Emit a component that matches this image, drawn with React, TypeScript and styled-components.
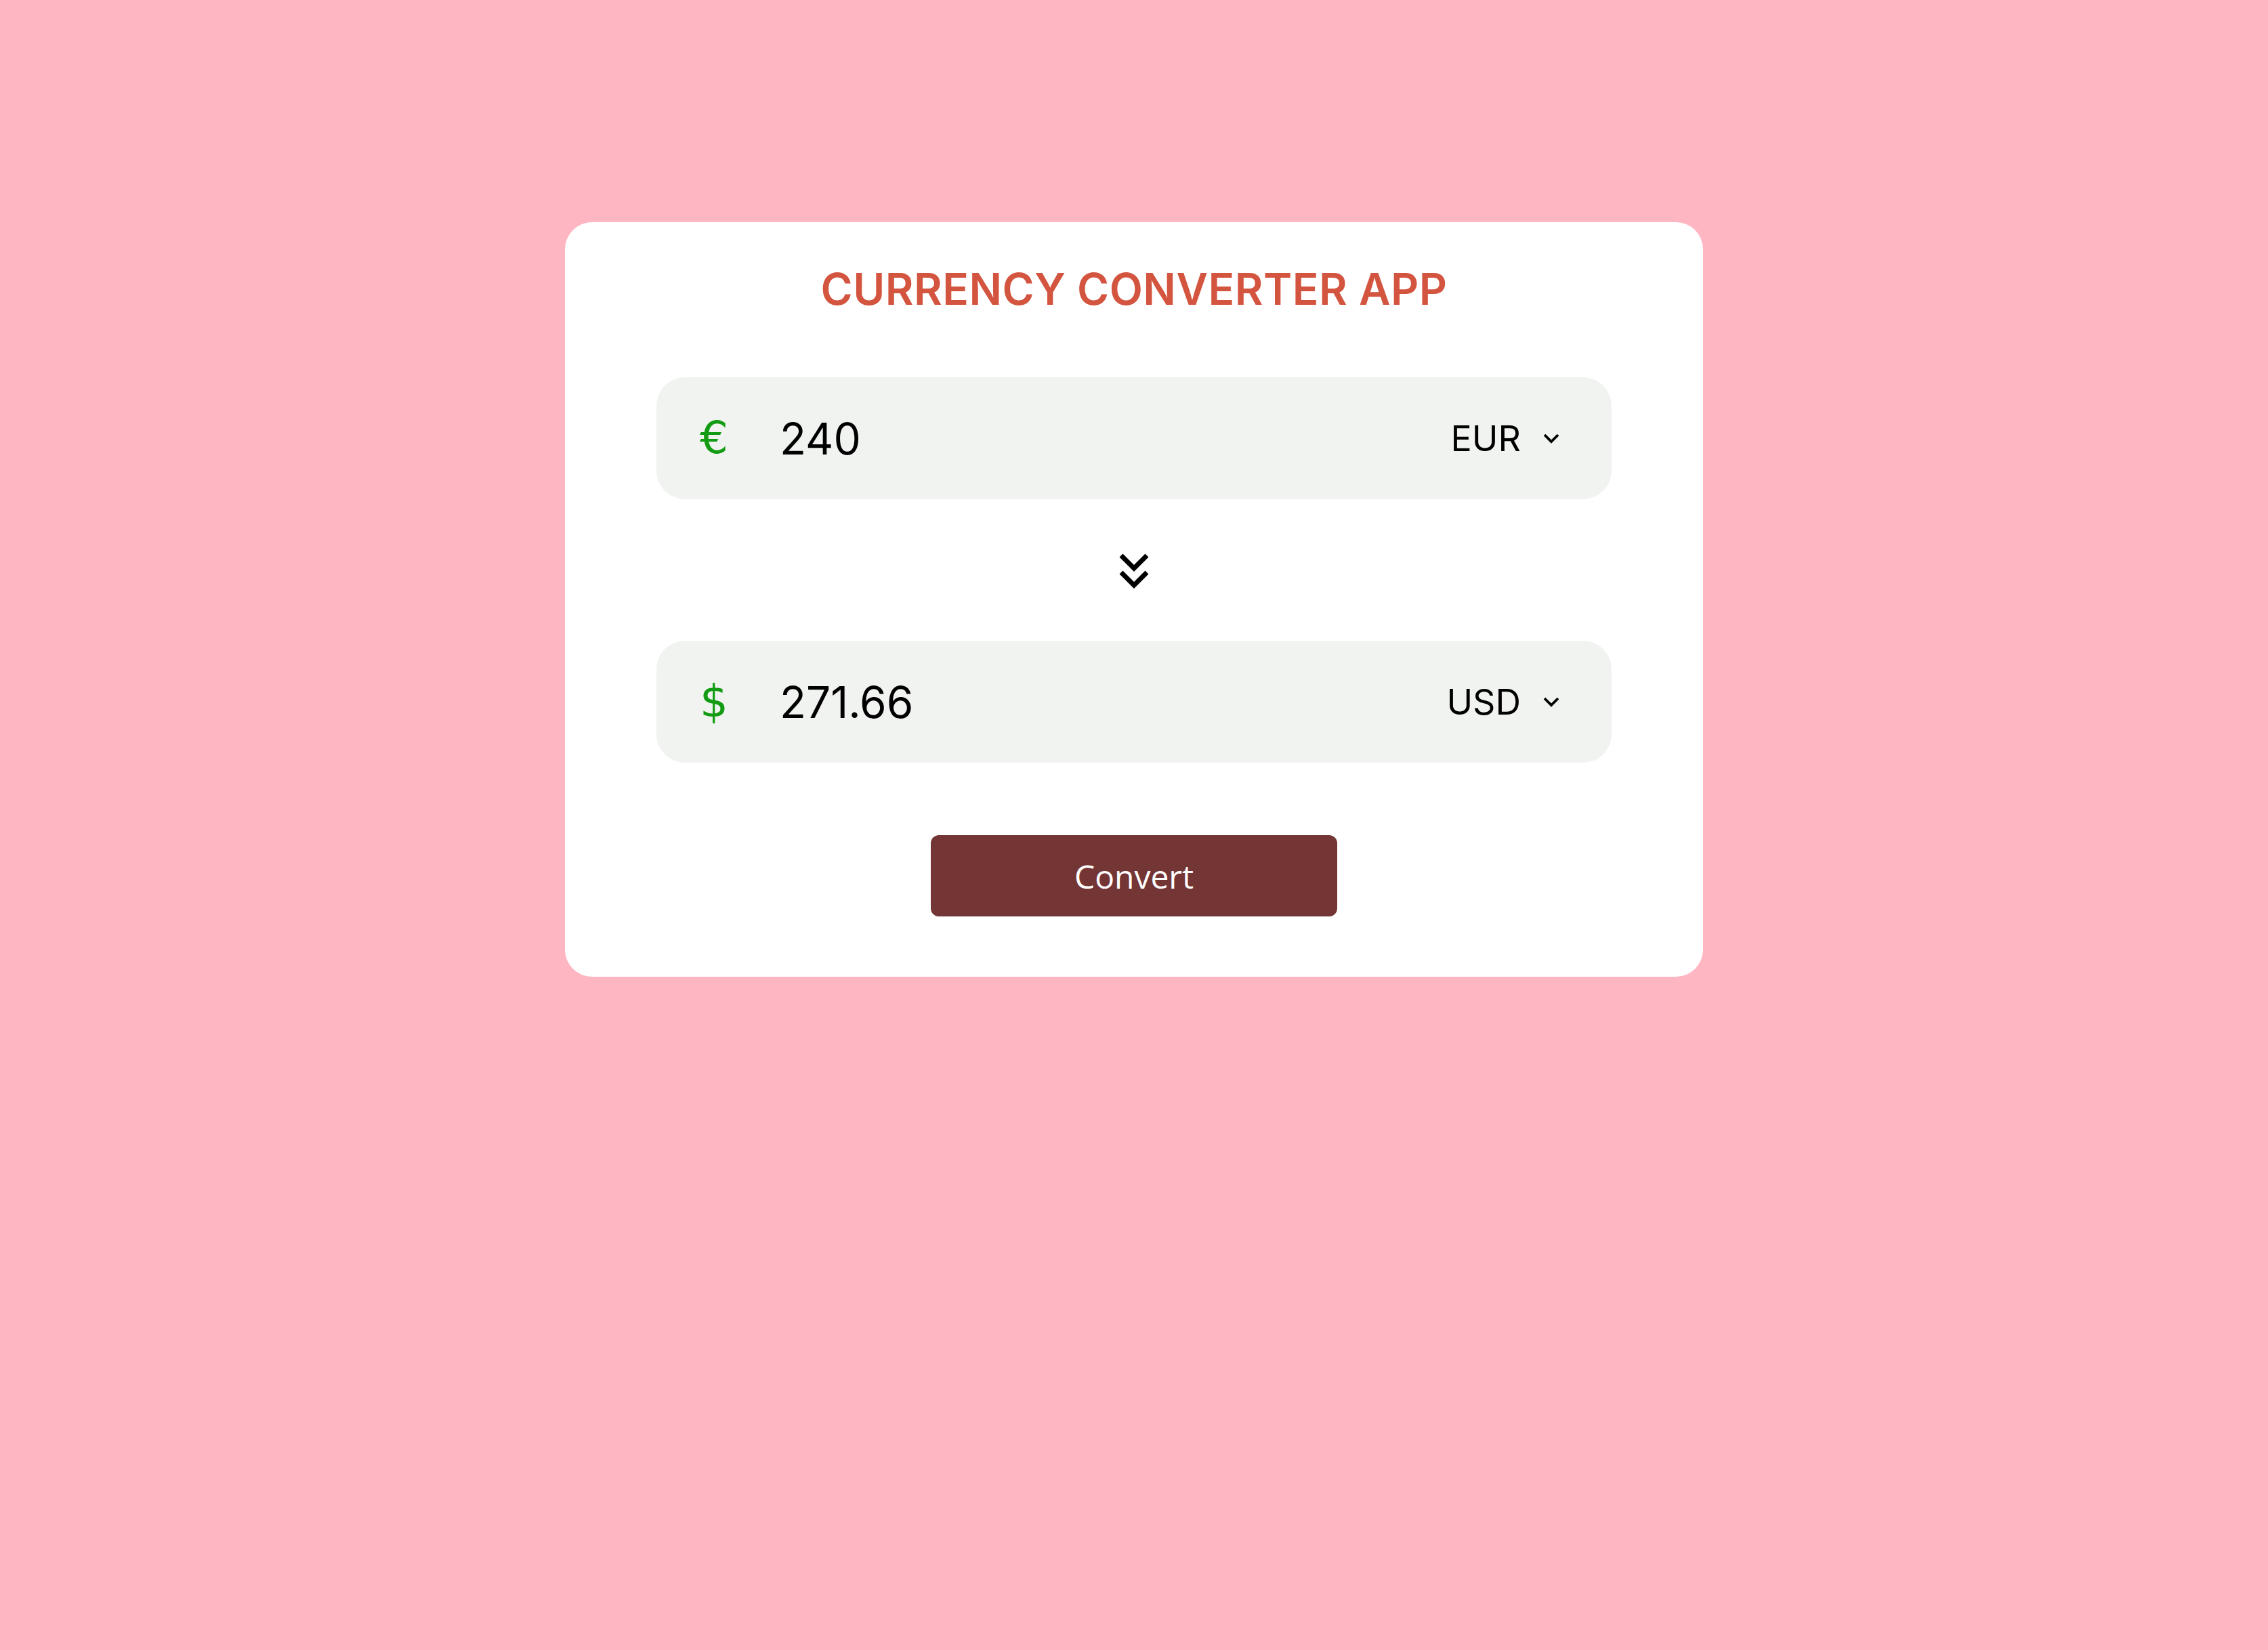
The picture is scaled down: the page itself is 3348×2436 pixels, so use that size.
import React from "react";
import styled, { createGlobalStyle } from "styled-components";

const Global = createGlobalStyle`
  html, body {
    margin: 0;
    padding: 0;
    background: #ffb6c3;
    min-height: 100%;
  }
  body {
    font-family: Inter, "Liberation Sans", sans-serif;
  }
`;

const Page = styled.div`
  min-height: 2436px;
  display: flex;
  justify-content: center;
  align-items: flex-start;
  padding-top: 328px;
  box-sizing: border-box;
`;

const Card = styled.div`
  width: 1680px;
  box-sizing: border-box;
  background: #ffffff;
  border-radius: 40px;
  padding: 60px 135px 89px;
  display: flex;
  flex-direction: column;
  align-items: center;
`;

const Title = styled.h1`
  margin: 0 0 92px;
  font-family: Inter, "Liberation Sans", sans-serif;
  font-weight: 600;
  font-size: 64px;
  line-height: 77px;
  color: #d3543f;
  letter-spacing: 0.5px;
`;

const Field = styled.div`
  width: 100%;
  height: 180px;
  box-sizing: border-box;
  background: #f1f3f0;
  border-radius: 42px;
  display: flex;
  align-items: center;
  padding: 0 76px 0 62px;
`;

const Symbol = styled.span`
  width: 46px;
  flex: none;
  text-align: center;
  color: #139c13;
  font-family: "DejaVu Sans", Inter, sans-serif;
  font-size: 66px;
  line-height: 1;
`;

const Amount = styled.input`
  flex: 1;
  min-width: 0;
  margin-left: 74px;
  border: none;
  outline: none;
  background: transparent;
  font-family: Inter, "Liberation Sans", sans-serif;
  font-size: 64px;
  color: #000;
  padding: 0;
`;

const Select = styled.div`
  display: flex;
  align-items: center;
  gap: 32px;
  font-family: Inter, "Liberation Sans", sans-serif;
  font-size: 52px;
  color: #000;
`;

const Swap = styled.svg`
  display: block;
  margin: 75px 0 74px;
`;

const Button = styled.button`
  margin-top: 107px;
  width: 600px;
  height: 120px;
  border: none;
  border-radius: 12px;
  background: #743535;
  color: #fff;
  font-family: "Open Sans", "Noto Sans", sans-serif;
  font-size: 48px;
  cursor: pointer;
`;

const Caret = () => (
  <svg width="26" height="18" viewBox="0 0 26 18">
    <polyline
      points="3,4 13,14 23,4"
      fill="none"
      stroke="#000"
      strokeWidth="3.8"
      strokeLinejoin="miter"
    />
  </svg>
);

type RowProps = { symbol: string; value: string; code: string };

const CurrencyRow = ({ symbol, value, code }: RowProps) => (
  <Field>
    <Symbol>{symbol}</Symbol>
    <Amount defaultValue={value} />
    <Select>
      <span>{code}</span>
      <Caret />
    </Select>
  </Field>
);

export default function App() {
  return (
    <>
      <Global />
      <Page>
        <Card>
          <Title>CURRENCY CONVERTER APP</Title>
          <CurrencyRow symbol="€" value="240" code="EUR" />
          <Swap width="56" height="60" viewBox="0 0 56 60">
            <polyline points="9,8 28,27 47,8" fill="none" stroke="#000" strokeWidth="7" />
            <polyline points="9,33 28,52 47,33" fill="none" stroke="#000" strokeWidth="7" />
          </Swap>
          <CurrencyRow symbol="$" value="271.66" code="USD" />
          <Button>Convert</Button>
        </Card>
      </Page>
    </>
  );
}
